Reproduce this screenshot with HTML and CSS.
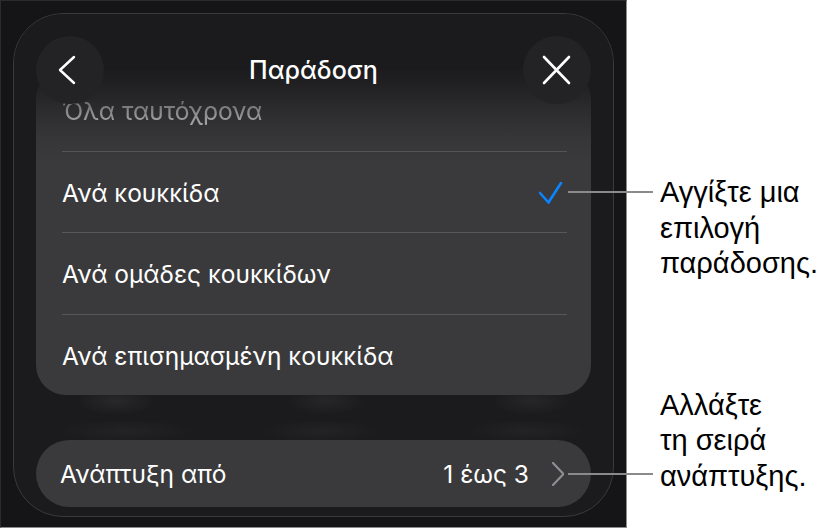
FILE: index.html
```html
<!DOCTYPE html>
<html lang="el">
<head>
<meta charset="utf-8">
<title>Παράδοση</title>
<link rel="stylesheet" href="styles.css">
</head>
<body>
<div class="stage">
  <div class="phone">
    <div class="frame">
      <div class="header">
        <div class="circle">
          <svg width="68" height="68" viewBox="0 0 68 68"><polyline points="38,21 24,34 38,47" fill="none" stroke="#fff" stroke-width="2.4" stroke-linecap="round" stroke-linejoin="round"/></svg>
        </div>
        <div class="title">Παράδοση</div>
        <div class="circle">
          <svg width="68" height="68" viewBox="0 0 68 68"><path d="M21 21 L46 47 M46 21 L21 47" fill="none" stroke="#fff" stroke-width="2.6" stroke-linecap="round"/></svg>
        </div>
      </div>
      <div class="card">
        <div class="row faded"><span class="label">Όλα ταυτόχρονα</span></div>
        <div class="row sep"><span class="label">Ανά κουκκίδα</span>
          <svg class="check" width="24" height="22" viewBox="0 0 24 22"><polyline points="1,11 9.5,20.5 22,1" fill="none" stroke="#0a84ff" stroke-width="2.6" stroke-linecap="round" stroke-linejoin="round"/></svg>
        </div>
        <div class="row sep"><span class="label">Ανά ομάδες κουκκίδων</span></div>
        <div class="row sep"><span class="label">Ανά επισημασμένη κουκκίδα</span></div>
      </div>
      <div class="ghost"></div>
      <div class="pill">
        <span class="label">Ανάπτυξη από</span>
        <span class="value">1 έως 3</span>
        <svg class="chev" width="12" height="24" viewBox="0 0 12 24"><polyline points="1,1 11.5,12 1,23" fill="none" stroke="#8e8e93" stroke-width="2.2" stroke-linecap="round" stroke-linejoin="round"/></svg>
      </div>
    </div>
  </div>
  <div class="notes">
    <p class="note first">Αγγίξτε μια<br>επιλογή<br>παράδοσης.</p>
    <p class="note second">Αλλάξτε<br>τη σειρά<br>ανάπτυξης.</p>
  </div>
  <div class="leader one"></div>
  <div class="leader two"></div>
</div>
</body>
</html>
```
FILE: styles.css
```css
* { box-sizing: border-box; }
html, body { margin: 0; padding: 0; background: #ffffff; }
body { width: 827px; height: 529px; overflow: hidden; }

.stage {
  position: relative;
  display: flex;
  align-items: flex-start;
  width: 827px;
  height: 529px;
}

.phone {
  width: 627px;
  height: 528px;
  flex: none;
  background: #151517;
  border-right: 1px solid #8c8c8c;
  border-bottom: 1px solid #8c8c8c;
  border-top: 1px solid #2c2c2e;
  border-left: 1px solid #2c2c2e;
  padding: 12px 12px 10px 12px;
}

.frame {
  position: relative;
  height: 100%;
  border: 1px solid #3a3a3c;
  border-radius: 50px;
  background: #1b1b1d;
  overflow: hidden;
  padding: 55px 22px 9px 22px;
  display: flex;
  flex-direction: column;
  font-family: "Inter", "Noto Sans", sans-serif;
  color: #ffffff;
}

.header {
  position: absolute;
  top: 0;
  left: 0;
  right: 0;
  height: 150px;
  padding: 22px 22px 0 22px;
  display: flex;
  align-items: flex-start;
  justify-content: space-between;
  z-index: 2;
  background: linear-gradient(to bottom,
    #1b1b1d 0px,
    #1b1b1d 52px,
    rgba(27,27,29,0.8) 72px,
    rgba(27,27,29,0.4) 100px,
    rgba(27,27,29,0.12) 125px,
    rgba(27,27,29,0) 150px);
}

.circle {
  width: 68px;
  height: 68px;
  border-radius: 50%;
  background: #232325;
}
.circle svg { display: block; }

.title {
  font-size: 25px;
  line-height: 68px;
  font-weight: 500;
}

.card {
  background: #3a3a3c;
  border-radius: 30px;
  flex: none;
  display: flex;
  flex-direction: column;
}

.row {
  height: 81.5px;
  margin: 0 24px 0 26px;
  display: flex;
  align-items: center;
  justify-content: space-between;
  font-size: 24.5px;
  padding-top: 2px;
}
.row.sep { border-top: 1px solid #58585b; }
.row.faded .label { filter: blur(0.7px); color: #dcdcdc; }
.check { margin-right: 4px; margin-top: 1px; }

.ghost {
  height: 45px;
  flex: none;
  background:
    radial-gradient(ellipse 40px 14px at 80px 6px, rgba(255,255,255,0.06), rgba(255,255,255,0)),
    radial-gradient(ellipse 40px 14px at 290px 6px, rgba(255,255,255,0.05), rgba(255,255,255,0)),
    radial-gradient(ellipse 40px 14px at 495px 6px, rgba(255,255,255,0.05), rgba(255,255,255,0)),
    radial-gradient(ellipse 70px 12px at 90px 36px, rgba(255,255,255,0.035), rgba(255,255,255,0)),
    radial-gradient(ellipse 60px 12px at 285px 36px, rgba(255,255,255,0.035), rgba(255,255,255,0)),
    radial-gradient(ellipse 60px 12px at 490px 36px, rgba(255,255,255,0.035), rgba(255,255,255,0));
}

.pill {
  height: 67px;
  flex: none;
  border-radius: 34px;
  background: #3a3a3c;
  display: flex;
  align-items: center;
  padding: 0 27px 0 24px;
  font-size: 24.5px;
}
.pill .label { flex: 1; }
.pill .value { margin-right: 23px; }
.chev { display: block; }

.notes {
  margin-left: 33px;
  padding-top: 175px;
  font-family: "Liberation Sans", Arial, sans-serif;
  color: #000000;
}
.note {
  margin: 0;
  font-size: 29px;
  line-height: 35.5px;
}
.note.second { margin-top: 106px; }

.leader {
  position: absolute;
  left: 568px;
  width: 85px;
  height: 2px;
  background: #8a8a8a;
}
.leader.one { top: 191px; }
.leader.two { top: 473px; }
```
